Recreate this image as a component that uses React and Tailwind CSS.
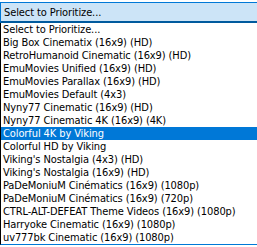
import React from "react";

const items = [
  "Select to Prioritize...",
  "Big Box Cinematix (16x9) (HD)",
  "RetroHumanoid Cinematic (16x9) (HD)",
  "EmuMovies Unified (16x9) (HD)",
  "EmuMovies Parallax (16x9) (HD)",
  "EmuMovies Default (4x3)",
  "Nyny77 Cinematic (16x9) (HD)",
  "Nyny77 Cinematic 4K (16x9) (4K)",
  "Colorful 4K by Viking",
  "Colorful HD by Viking",
  "Viking's Nostalgia (4x3) (HD)",
  "Viking's Nostalgia (16x9) (HD)",
  "PaDeMoniuM Cinématics (16x9) (1080p)",
  "PaDeMoniuM Cinématics (16x9) (720p)",
  "CTRL-ALT-DEFEAT Theme Videos (16x9) (1080p)",
  "Harryoke Cinematic (16x9) (1080p)",
  "uv777bk Cinematic (16x9) (1080p)",
];

export default function App() {
  return (
    <div
      className="w-[257px] h-[247px] overflow-hidden bg-white text-black font-stretch-condensed tracking-[-0.1px]"
      style={{ fontFamily: "'DejaVu Sans Condensed', 'DejaVu Sans', sans-serif" }}
    >
      <div className="pt-[2px]">
        <div className="h-[21px] w-[260px] border border-b-2 border-[#0078d7] border-b-[#005a9e] bg-[#cce4f7] flex items-center pl-[3px] text-[11px] leading-none">
          Select to Prioritize...
        </div>
      </div>
      <div className="w-[260px] border-l border-black border-b border-b-[#0078d7] text-[11px]">
        {items.map((t, i) => (
          <div
            key={i}
            className={
              "h-[13px] leading-[13px] pl-[2px] whitespace-nowrap " +
              (i === 8 ? "bg-[#0078d7] text-white" : "")
            }
          >
            {t}
          </div>
        ))}
      </div>
    </div>
  );
}
